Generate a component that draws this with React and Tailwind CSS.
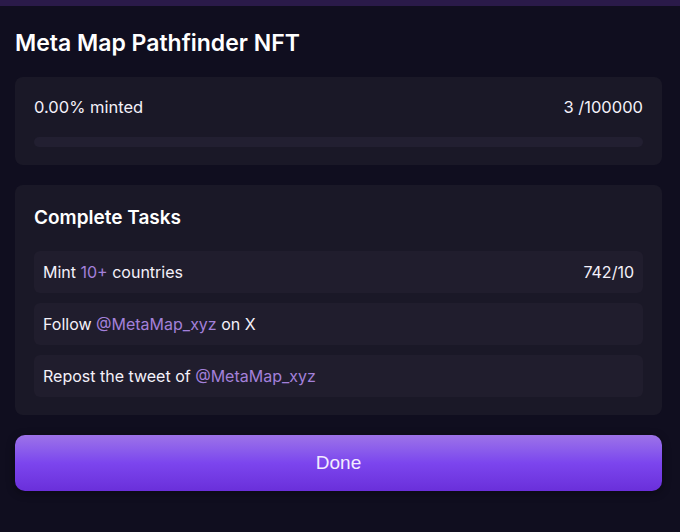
import { useState } from 'react';

const tasks = [
  { id: 1, parts: ['Mint ', { hl: '10+' }, ' countries'], progress: '742/10' },
  { id: 2, parts: ['Follow ', { hl: '@MetaMap_xyz' }, ' on X'] },
  { id: 3, parts: ['Repost the tweet of ', { hl: '@MetaMap_xyz' }] },
];

const minted = 3;
const supply = 100000;

const TaskRow = ({ task }) => (
  <div className="flex items-center justify-between h-[42px] px-[9px] rounded-md bg-[#201d2d] text-[16px] text-[#f4f1fa]">
    <span>
      {task.parts.map((p, i) =>
        typeof p === 'string' ? (
          <span key={i}>{p}</span>
        ) : (
          <span key={i} className="text-[#a380da]">{p.hl}</span>
        )
      )}
    </span>
    {task.progress && <span>{task.progress}</span>}
  </div>
);

const App = () => {
  const [done, setDone] = useState(false);
  const pct = ((minted / supply) * 100).toFixed(2);

  return (
    <div
      className="w-[680px] h-[532px] bg-[#100e1f] flex flex-col"
      style={{ fontFamily: 'Inter, "Noto Sans", sans-serif' }}
    >
      <div className="h-[6px] bg-[#2a1a49]" />

      <div className="flex flex-col px-[15px] pr-[18px]">
        <h1 className="mt-[23px] text-[23px] leading-[29px] font-semibold text-white">
          Meta Map Pathfinder NFT
        </h1>

        {/* mint progress */}
        <div className="mt-[19px] h-[88px] rounded-lg bg-[#1a1827] px-[19px] pt-[19px]">
          <div className="flex justify-between text-[16.5px] leading-[22px] text-[#f4f1fa]">
            <span>{pct}% minted</span>
            <span>{minted} /{supply}</span>
          </div>
          <div className="mt-[19px] h-[10px] rounded-full bg-[#221f31]">
            <div className="h-full rounded-full bg-[#8b5cf6]" style={{ width: `${pct}%` }} />
          </div>
        </div>

        {/* tasks */}
        <div className="mt-[20px] h-[230px] rounded-lg bg-[#1a1827] px-[19px] pt-[21px]">
          <h2 className="text-[19px] leading-[24px] font-semibold text-white">Complete Tasks</h2>
          <div className="mt-[21px] flex flex-col gap-[10px]">
            {tasks.map(t => (
              <TaskRow key={t.id} task={t} />
            ))}
          </div>
        </div>

        <button
          onClick={() => setDone(!done)}
          className="mt-[20px] h-[56px] rounded-[10px] bg-gradient-to-b from-[#9d72e8] via-[#7c45ee] to-[#6a2fda] text-[19px] text-[#f3ecff] shadow-[0_2px_8px_rgba(0,0,0,0.4)]"
          style={{ fontFamily: '"Liberation Sans", Arial, sans-serif' }}
        >
          Done
        </button>
      </div>
    </div>
  );
};

export default App;
